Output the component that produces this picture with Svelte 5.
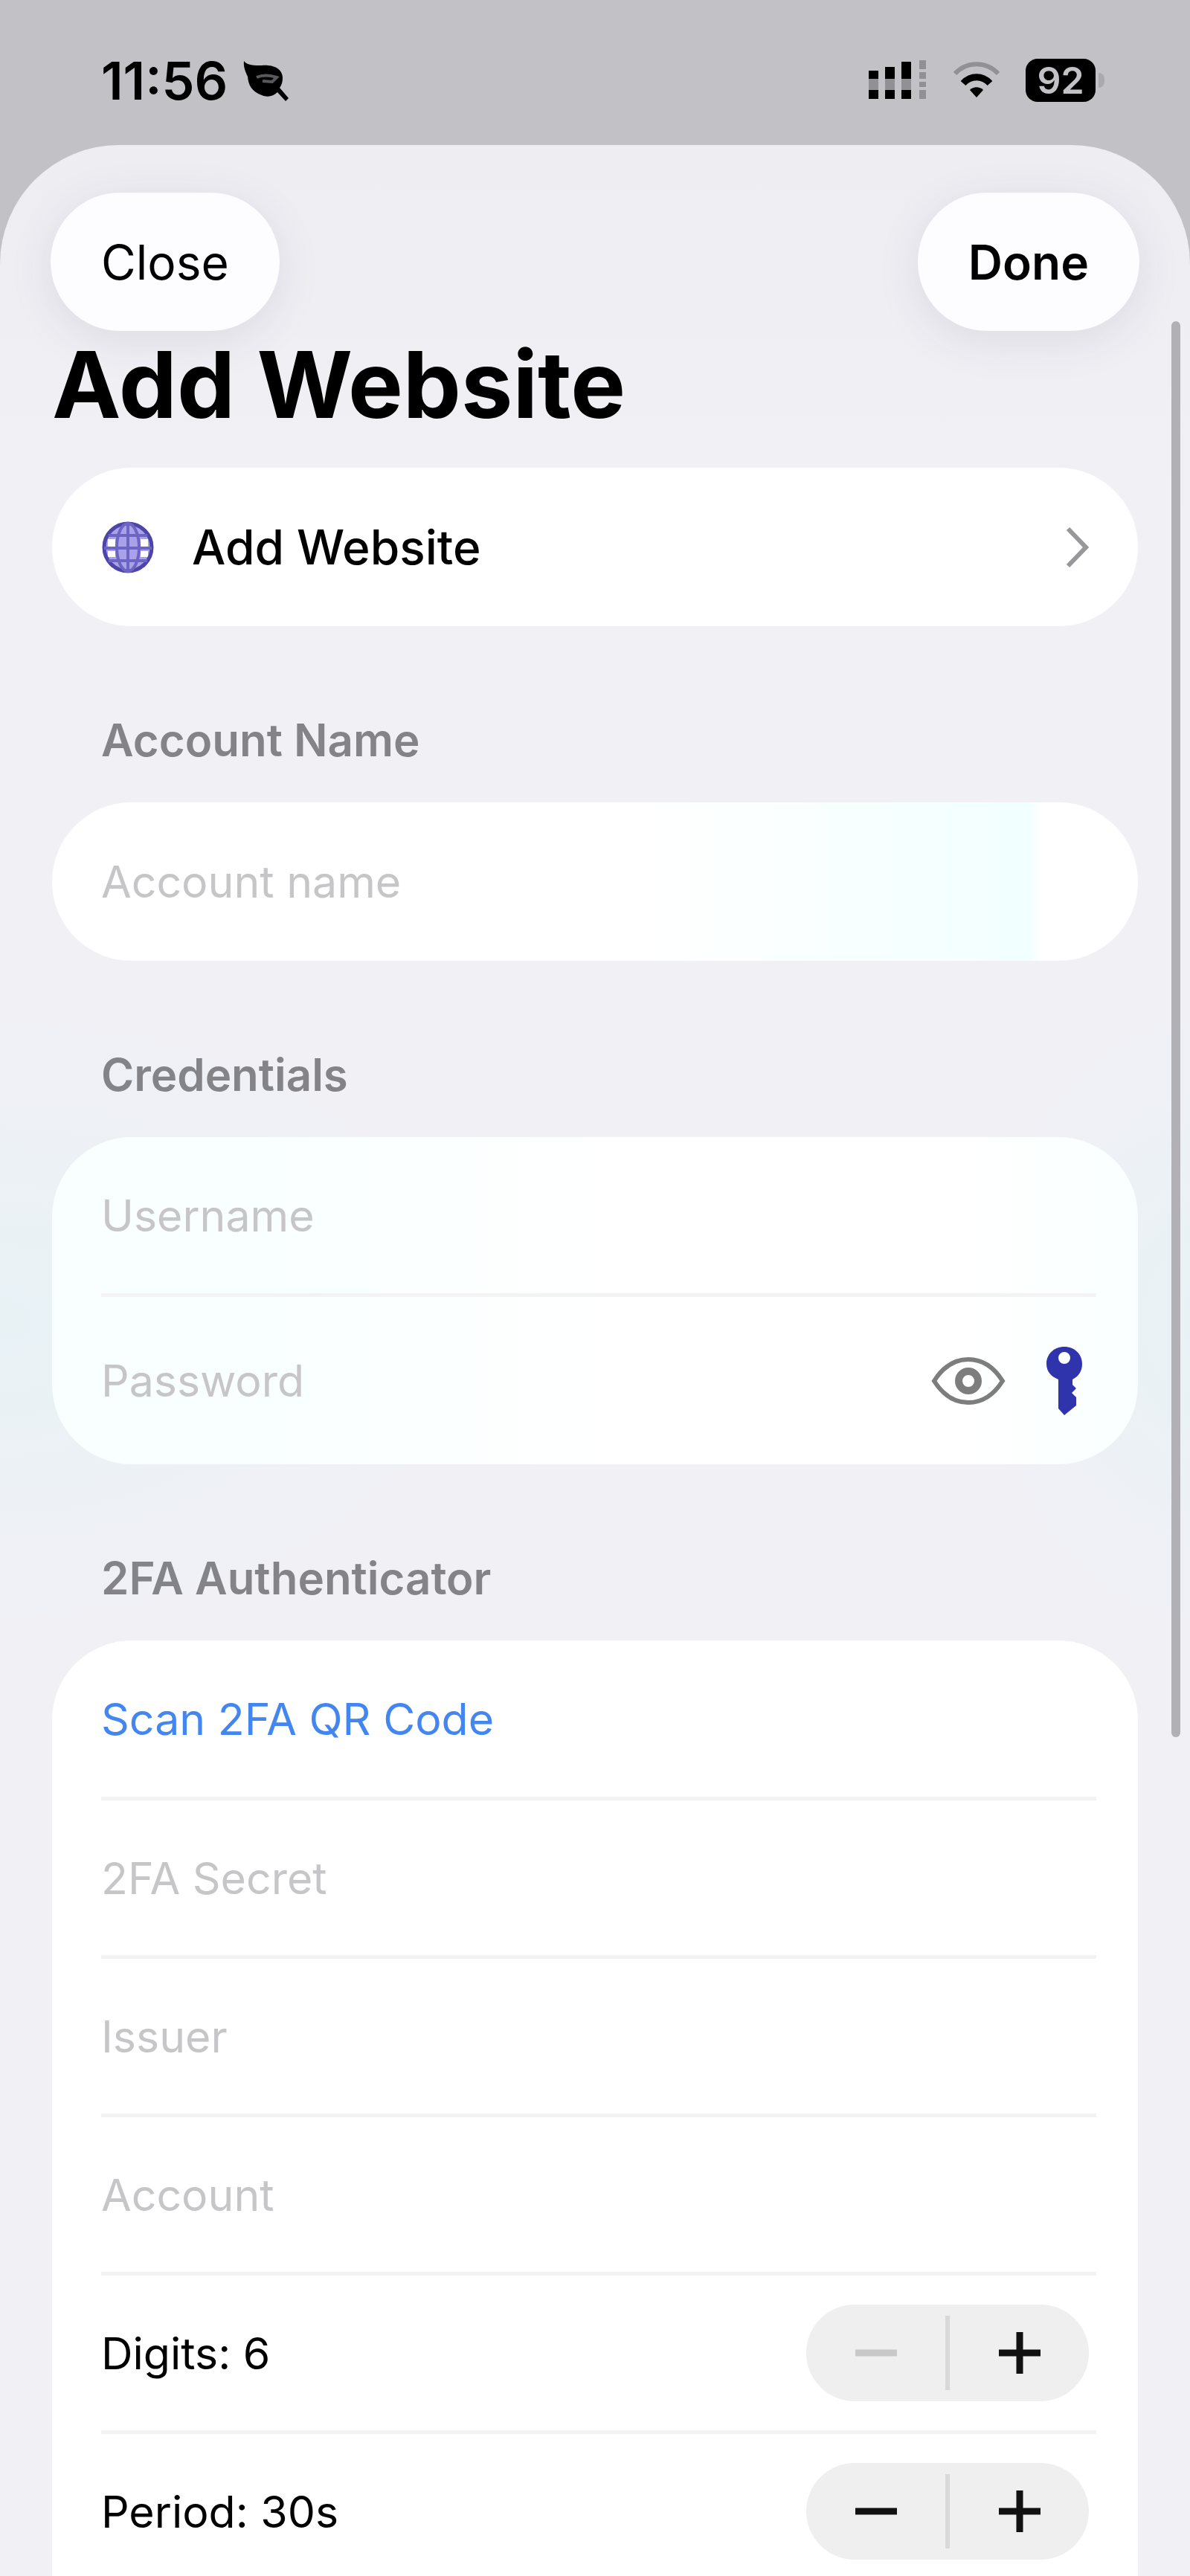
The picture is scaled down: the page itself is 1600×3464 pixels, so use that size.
<script>
  let digits = $state(6);
  let period = $state(30);
  let showPassword = $state(false);
  let accountName = $state('');
  let username = $state('');
  let password = $state('');

  const otpFields = [
    { id: 'secret', label: '2FA Secret' },
    { id: 'issuer', label: 'Issuer' },
    { id: 'account', label: 'Account' },
  ];
</script>

{#snippet stepper(name, canDecrease, decrease, increase)}
  <div class="stepper" role="group" aria-label={name}>
    <button type="button" aria-label="Decrease {name}" disabled={!canDecrease} onclick={decrease}>
      <svg viewBox="0 0 56 56" width="56" height="56"><path d="M0 28h56" /></svg>
    </button>
    <button type="button" aria-label="Increase {name}" onclick={increase}>
      <svg viewBox="0 0 56 56" width="56" height="56"><path d="M0 28h56M28 0v56" /></svg>
    </button>
  </div>
{/snippet}

<div class="screen">
  <header class="status">
    <div class="status-side">
      <span class="time">11:56</span>
      <svg class="leaf" viewBox="0 0 64 56" width="64" height="56" aria-hidden="true">
        <path
          d="M2 2c4 6 14 6 24 6 14-1 27 3 28 16 0 6-1 10-4 14l12 14-4 4-11-12c-6 6-14 7-21 4C12 43 8 34 7 23 4 16 1 10 2 2Z"
        />
        <path class="vein" d="M19 24c9-4 18-3 27 0l-6 6-13-1" />
      </svg>
    </div>
    <div class="status-side">
      <svg viewBox="0 0 82 54" width="82" height="54" aria-hidden="true">
        <path d="M0 14h13v11H0zM22 9h13v16H22zM44 2h13v23H44zM0 40h13v12H0zM22 40h13v12H22zM44 40h13v12H44z" />
        <path class="dim" d="M0 25h13v15H0zM22 25h13v15H22zM44 25h13v15H44zM68 0h9v12h-9zM68 16h9v9h-9zM68 29h9v7h-9zM68 40h9v12h-9z" />
      </svg>
      <svg class="wifi" viewBox="0 0 64 50" width="64" height="50" aria-hidden="true">
        <path class="outer" d="M3 16C19-1 45-1 61 16" />
        <path class="inner" d="M14 29c10-11 26-11 36 0" />
        <path d="M32 48 23 38c5-5 13-5 18 0Z" />
      </svg>
      <div class="battery"><span>92</span></div>
    </div>
  </header>

  <main class="sheet">
    <nav class="toolbar">
      <button type="button" class="pill">Close</button>
      <button type="button" class="pill strong">Done</button>
    </nav>

    <h1>Add Website</h1>

    <section class="card">
      <button type="button" class="row link-row">
        <svg viewBox="0 0 72 72" width="72" height="72" aria-hidden="true">
          <circle cx="36" cy="36" r="32" fill="#a9a2e8" />
          <path d="M9 25h10v10H9zM9 41h10v8H9zM53 25h10v10H53zM53 41h10v8H53z" fill="#fff" />
          <g fill="none" stroke="#4d46a8" stroke-width="5">
            <circle cx="36" cy="36" r="32" />
            <ellipse cx="36" cy="36" rx="15" ry="32" stroke="#6d65c4" stroke-width="4" />
            <path d="M36 4v64M4 37h64M10 20h52M10 54h52" stroke="#6d65c4" stroke-width="4" />
          </g>
        </svg>
        <span>Add Website</span>
        <svg class="chevron" viewBox="0 0 32 56" width="32" height="56" aria-hidden="true">
          <path d="M4 3l24 25L4 53" />
        </svg>
      </button>
    </section>

    <h2><label for="account-name">Account Name</label></h2>
    <section class="card tint-right">
      <div class="row">
        <input id="account-name" type="text" placeholder="Account name" bind:value={accountName} />
      </div>
    </section>

    <h2>Credentials</h2>
    <section class="card tint-left">
      <div class="row first">
        <input type="text" aria-label="Username" placeholder="Username" bind:value={username} />
      </div>
      <div class="row tall">
        <input
          type={showPassword ? 'text' : 'password'}
          aria-label="Password"
          placeholder="Password"
          bind:value={password}
        />
        <button type="button" class="icon" aria-label="Show password" onclick={() => (showPassword = !showPassword)}>
          <svg viewBox="0 0 100 66" width="100" height="66">
            <g fill="none" stroke="#7d7d7d" stroke-width="6">
              <path d="M4 33C16 14 32 4 50 4s34 10 46 29C84 52 68 62 50 62S16 52 4 33Z" />
              <circle cx="50" cy="33" r="13" stroke-width="10" />
            </g>
          </svg>
        </button>
        <button type="button" class="icon" aria-label="Generate password">
          <svg viewBox="0 0 50 94" width="50" height="94">
            <path
              fill="#2f34ad"
              fill-rule="evenodd"
              d="M25 1c14 0 24 10 24 23 0 10-5 17-13 21v7l5 5-6 6 6 6v11L25 93l-8-9V45C7 41 1 34 1 24 1 11 11 1 25 1Zm0 7a8 8 0 1 0 0 16 8 8 0 0 0 0-16Z"
            />
          </svg>
        </button>
      </div>
    </section>

    <h2>2FA Authenticator</h2>
    <section class="card open">
      <div class="row first">
        <button type="button" class="scan">Scan 2FA QR Code</button>
      </div>
      {#each otpFields as field (field.id)}
        <div class="row">
          <input id={field.id} type="text" aria-label={field.label} placeholder={field.label} />
        </div>
      {/each}
      <div class="row">
        <span>Digits: {digits}</span>
        {@render stepper('Digits', digits > 6, () => digits--, () => digits++)}
      </div>
      <div class="row">
        <span>Period: {period}s</span>
        {@render stepper('Period', period > 5, () => (period -= 5), () => (period += 5))}
      </div>
    </section>

    <div class="scrollbar" aria-hidden="true"></div>
  </main>
</div>

<style>
  :global(body) {
    margin: 0;
  }

  .screen {
    height: 100vh;
    display: flex;
    flex-direction: column;
    overflow: hidden;
    background: #c2c1c6;
    color: #000;
    font-family: Inter, 'Liberation Sans', sans-serif;
    font-size: 59px;
  }

  button,
  input {
    border: 0;
    padding: 0;
    background: none;
    color: inherit;
    font: inherit;
  }

  svg {
    display: block;
    flex: none;
  }

  .status {
    flex: none;
    height: 195px;
    box-sizing: border-box;
    display: flex;
    justify-content: space-between;
    padding: 68px 127px 47px 136px;
  }

  .status-side {
    display: flex;
    align-items: center;
  }

  .time {
    font-size: 70px;
    font-weight: 600;
  }

  .leaf {
    margin-left: 20px;
  }

  .leaf .vein {
    fill: none;
    stroke: #59585c;
    stroke-width: 4;
  }

  .dim {
    opacity: 0.25;
  }

  .wifi {
    margin: 0 34px 0 31px;
  }

  .wifi .outer,
  .wifi .inner {
    fill: none;
    stroke: #000;
    stroke-width: 9;
  }

  .wifi .outer {
    stroke-width: 6;
    opacity: 0.25;
  }

  .battery {
    position: relative;
    width: 94px;
    height: 58px;
    display: flex;
    align-items: center;
    justify-content: center;
    border-radius: 16px;
    background: #000;
    color: #c2c1c6;
    font-size: 50px;
    font-weight: 600;
  }

  .battery::after {
    content: '';
    position: absolute;
    left: 100%;
    width: 8px;
    height: 20px;
    margin-left: 4px;
    border-radius: 0 8px 8px 0;
    background: #aaa9ae;
  }

  .sheet {
    position: relative;
    flex: 1 0 auto;
    padding: 64px 70px 0;
    border-radius: 160px 160px 0 0;
    background:
      radial-gradient(closest-side, #e8f2f5, transparent) -700px 1130px / 1400px 900px no-repeat,
      radial-gradient(closest-side, #e8f2f5, transparent) calc(100% + 300px) 1130px / 600px 900px no-repeat,
      linear-gradient(#eeedf2, #f1f0f5 500px);
  }

  .toolbar {
    display: flex;
    justify-content: space-between;
    margin: 0 -2px;
  }

  .pill {
    height: 186px;
    padding: 0 68px;
    border-radius: 93px;
    background: #fdfcff;
    box-shadow: 0 12px 60px rgba(60, 60, 80, 0.1);
    font-size: 64px;
  }

  .strong {
    font-weight: 600;
  }

  h1 {
    margin: 0 0 40px;
    font-size: 124px;
    font-weight: 700;
    line-height: 144px;
  }

  h2 {
    margin: 0;
    padding: 113px 66px 44px;
    color: #838388;
    font-size: 60px;
    font-weight: 600;
    line-height: 80px;
  }

  .card {
    border-radius: 107px;
    background: #fff;
  }

  .tint-right {
    background: linear-gradient(to right, #fff 55%, #f2ffff 90%, #fff 91%);
  }

  .tint-left {
    background: linear-gradient(to right, #f9ffff 20%, #fff 50%, #fff 85%, #f9ffff);
  }

  .open {
    border-radius: 107px 107px 0 0;
  }

  .row {
    height: 213px;
    box-sizing: border-box;
    display: flex;
    align-items: center;
    margin: 0 56px 0 66px;
  }

  .row.first {
    height: 210px;
  }

  .row.tall {
    height: 230px;
  }

  .row + .row {
    border-top: 5px solid #f3f3f3;
  }

  .row > span {
    flex: 1;
  }

  .link-row {
    width: calc(100% - 122px);
    font-size: 64px;
    font-weight: 500;
    text-align: left;
  }

  .link-row span {
    margin-left: 50px;
  }

  .chevron {
    margin-right: 10px;
    fill: none;
    stroke: #98989c;
    stroke-width: 6;
  }

  input {
    flex: 1;
    min-width: 0;
    outline: none;
  }

  input::placeholder {
    color: #c6c6c8;
    opacity: 1;
  }

  .icon + .icon {
    margin: 0 18px 0 54px;
  }

  .scan {
    color: #4486f0;
  }

  .stepper {
    width: 380px;
    height: 130px;
    display: flex;
    align-items: center;
    margin-right: 10px;
    border-radius: 65px;
    background: #efefef;
  }

  .stepper button {
    flex: 1;
    height: 100px;
    display: flex;
    align-items: center;
    justify-content: center;
  }

  .stepper button + button {
    border-left: 6px solid #d8d8d8;
  }

  .stepper path {
    stroke: #111;
    stroke-width: 9;
  }

  .stepper button:disabled path {
    stroke: #c8c8c8;
  }

  .scrollbar {
    position: absolute;
    top: 237px;
    right: 13px;
    width: 12px;
    height: 1904px;
    border-radius: 6px;
    background: #b1b0b5;
  }
</style>
